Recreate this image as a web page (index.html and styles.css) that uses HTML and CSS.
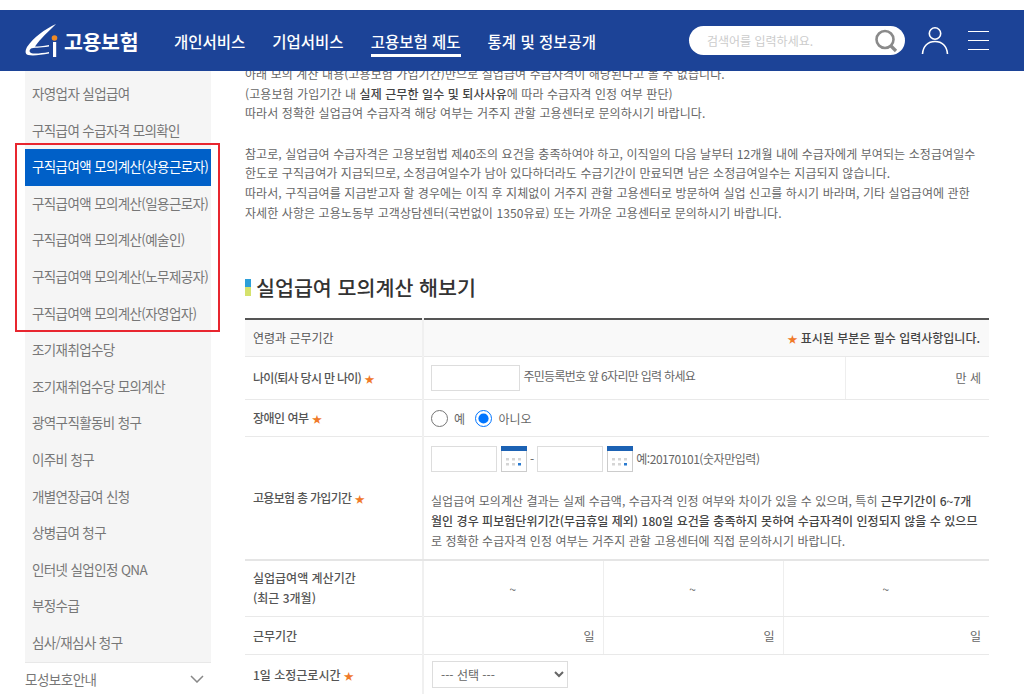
FILE: index.html
```html
<!DOCTYPE html>
<html lang="ko">
<head>
    <meta charset="UTF-8">
    <title>실업급여 모의계산</title>
    <link rel="stylesheet" href="styles.css">
</head>
<body>
<div class="page">
    <header class="top">
        <a class="logo">
            <svg width="33" height="35" viewBox="0 0 33 35">
                <path d="M31 1 C20 6 8 15 2 24 C0 28 0 31 3 32 C8 33 16 32 24 30.500 L24 29 C16 30.500 9 31 6 30 C4 29 4 27 6 25.500 C8 24.500 15 25 24 23.500 L24 22 C18 23 13 23.500 10 23.500 C15 16 24 8 31 1 Z" fill="#fff"/>
                <circle cx="29.500" cy="15" r="2.800" fill="#f08a24"/>
                <rect x="28" y="19" width="3.200" height="15" fill="#fff"/>
            </svg>
            <span class="logo-text">고용보험</span>
        </a>
        <nav class="gnb">
            <a>개인서비스</a>
            <a>기업서비스</a>
            <a class="on">고용보험 제도</a>
            <a>통계 및 정보공개</a>
        </nav>
        <div class="search">
            <span class="search-ph">검색어를 입력하세요.</span>
            <svg width="24" height="24" viewBox="0 0 24 24" fill="none" stroke="#8a8a8a" stroke-width="2.600">
                <circle cx="11" cy="10.500" r="8.500"/>
                <path d="M17 17 L22 22" stroke-width="3.200"/>
            </svg>
        </div>
        <svg class="user-ico" width="28" height="29" viewBox="0 0 28 29" fill="none" stroke="#fff" stroke-width="1.600">
            <circle cx="14" cy="7.500" r="5.700"/>
            <path d="M1.500 28 C2 20 7 15.500 14 15.500 C21 15.500 26 20 26.500 28"/>
        </svg>
        <div class="burger"><i></i><i></i><i></i></div>
    </header>

    <div class="body-wrap">
        <aside class="side">
            <ul class="side-list">
                <li>자영업자 실업급여</li>
                <li>구직급여 수급자격 모의확인</li>
                <li class="on">구직급여액 모의계산(상용근로자)</li>
                <li>구직급여액 모의계산(일용근로자)</li>
                <li>구직급여액 모의계산(예술인)</li>
                <li>구직급여액 모의계산(노무제공자)</li>
                <li>구직급여액 모의계산(자영업자)</li>
                <li>조기재취업수당</li>
                <li>조기재취업수당 모의계산</li>
                <li>광역구직활동비 청구</li>
                <li>이주비 청구</li>
                <li>개별연장급여 신청</li>
                <li>상병급여 청구</li>
                <li>인터넷 실업인정 QNA</li>
                <li>부정수급</li>
                <li>심사/재심사 청구</li>
            </ul>
            <div class="side-next">
                <span>모성보호안내</span>
                <svg width="14" height="8" viewBox="0 0 14 8" fill="none" stroke="#888" stroke-width="1.500"><path d="M1 1 L7 7 L13 1"/></svg>
            </div>
            <div class="red-box"></div>
        </aside>

        <main class="cont">
            <p class="desc">아래 모의 계산 내용(고용보험 가입기간)만으로 실업급여 수급자격이 해당된다고 볼 수 없습니다.<br>
            (고용보험 가입기간 내 <b>실제 근무한 일수 및 퇴사사유</b>에 따라 수급자격 인정 여부 판단)<br>
            따라서 정확한 실업급여 수급자격 해당 여부는 거주지 관할 고용센터로 문의하시기 바랍니다.</p>
            <p class="desc">참고로, 실업급여 수급자격은 고용보험법 제40조의 요건을 충족하여야 하고, 이직일의 다음 날부터 12개월 내에 수급자에게 부여되는 소정급여일수<br>
            한도로 구직급여가 지급되므로, 소정급여일수가 남아 있다하더라도 수급기간이 만료되면 남은 소정급여일수는 지급되지 않습니다.<br>
            따라서, 구직급여를 지급받고자 할 경우에는 이직 후 지체없이 거주지 관할 고용센터로 방문하여 실업 신고를 하시기 바라며, 기타 실업급여에 관한<br>
            자세한 사항은 고용노동부 고객상담센터(국번없이 1350유료) 또는 가까운 고용센터로 문의하시기 바랍니다.</p>

            <h2 class="tit"><i class="tit-mark"></i>실업급여 모의계산 해보기</h2>

            <table class="calc">
                <colgroup>
                    <col class="c-head"><col class="c-a"><col class="c-b"><col class="c-c"><col class="c-d">
                </colgroup>
                <tr class="r-head">
                    <th>연령과 근무기간</th>
                    <td colspan="4" class="req-note"><em>★</em> 표시된 부분은 필수 입력사항입니다.</td>
                </tr>
                <tr class="r-age">
                    <th><span class="tight-a">나이(퇴사 당시 만 나이)</span> <em>★</em></th>
                    <td colspan="3"><input class="box box-age" type="text"> <span class="tight-a">주민등록번호 앞 6자리만 입력 하세요</span></td>
                    <td class="right vline">만 세</td>
                </tr>
                <tr class="r-dis">
                    <th><span class="tight-b">장애인 여부</span> <em>★</em></th>
                    <td colspan="4">
                        <label class="rd"><input type="radio" name="dis"> 예</label>
                        <label class="rd"><input type="radio" name="dis" checked> 아니오</label>
                    </td>
                </tr>
                <tr class="r-period">
                    <th><span class="tight-c">고용보험 총 가입기간</span> <em>★</em></th>
                    <td colspan="4">
                        <div class="dates">
                            <input class="box box-date" type="text">
                            <svg class="cal" width="26" height="26" viewBox="0 0 26 26">
                                <rect x="0.500" y="0.500" width="25" height="25" fill="#fff" stroke="#ccc"/>
                                <rect x="0" y="0" width="26" height="5" fill="#1c62b4"/>
                                <path d="M5 12h3v2.500h-3zM11 12h3v2.500h-3zM17 12h3v2.500h-3zM5 17h3v2.500h-3zM11 17h3v2.500h-3z" fill="#d5d5d5"/>
                                <rect x="17" y="17" width="3" height="2.500" fill="#2a7bd0"/>
                            </svg>
                            <span class="dash">-</span>
                            <input class="box box-date" type="text">
                            <svg class="cal" width="26" height="26" viewBox="0 0 26 26">
                                <rect x="0.500" y="0.500" width="25" height="25" fill="#fff" stroke="#ccc"/>
                                <rect x="0" y="0" width="26" height="5" fill="#1c62b4"/>
                                <path d="M5 12h3v2.500h-3zM11 12h3v2.500h-3zM17 12h3v2.500h-3zM5 17h3v2.500h-3zM11 17h3v2.500h-3z" fill="#d5d5d5"/>
                                <rect x="17" y="17" width="3" height="2.500" fill="#2a7bd0"/>
                            </svg>
                            <span class="ex">예:20170101(숫자만입력)</span>
                        </div>
                        <p class="note">실업급여 모의계산 결과는 실제 수급액, 수급자격 인정 여부와 차이가 있을 수 있으며, 특히 <b>근무기간이 6~7개</b><br>
                        <b>월인 경우 피보험단위기간(무급휴일 제외) 180일 요건을 충족하지 못하여 수급자격이 인정되지 않을 수 있으므</b><br>
                        로 정확한 수급자격 인정 여부는 거주지 관할 고용센터에 직접 문의하시기 바랍니다.</p>
                    </td>
                </tr>
                <tr class="r-range">
                    <th>실업급여액 계산기간<br>(최근 3개월)</th>
                    <td class="center">~</td>
                    <td class="center vline">~</td>
                    <td colspan="2" class="center vline">~</td>
                </tr>
                <tr class="r-work">
                    <th>근무기간</th>
                    <td class="right">일</td>
                    <td class="right vline">일</td>
                    <td colspan="2" class="right vline">일</td>
                </tr>
                <tr class="r-hour">
                    <th>1일 소정근로시간 <em>★</em></th>
                    <td colspan="4">
                        <select class="sel"><option>--- 선택 ---</option></select>
                    </td>
                </tr>
            </table>
        </main>
    </div>
</div>
</body>
</html>
```

FILE: styles.css
```css
* {
    box-sizing: border-box;
}
html, body {
    margin: 0;
    padding: 0;
    background: #fff;
}
body {
    font-family: "Noto Sans CJK KR", "Noto Sans", sans-serif;
    font-size: 12px;
    color: #666;
}
.page {
    height: 694px;
    overflow: hidden;
    padding-top: 10px;
}

/* header */
.top {
    position: relative;
    z-index: 2;
    display: flex;
    align-items: center;
    height: 61px;
    padding-left: 25px;
    background: #1c4397;
}
.logo {
    display: flex;
    align-items: center;
    width: 149px;
    flex-shrink: 0;
}
.logo svg {
    flex-shrink: 0;
    margin-right: 6px;
}
.logo-text {
    font-size: 20.500px;
    font-weight: 700;
    color: #fff;
    letter-spacing: -0.300px;
    white-space: nowrap;
}
.gnb {
    display: flex;
    gap: 27px;
    width: 515px;
    flex-shrink: 0;
}
.gnb a {
    position: relative;
    font-size: 15.500px;
    font-weight: 500;
    color: #fff;
    white-space: nowrap;
}
.gnb a.on::after {
    content: "";
    position: absolute;
    left: 0;
    right: 0;
    bottom: -5px;
    height: 3px;
    background: #fff;
}
.search {
    display: flex;
    align-items: center;
    justify-content: space-between;
    width: 216px;
    height: 29px;
    padding: 0 7px 0 18px;
    border-radius: 15px;
    background: #fff;
    flex-shrink: 0;
}
.search-ph {
    font-size: 12px;
    color: #ccc;
}
.user-ico {
    margin-left: 16px;
    flex-shrink: 0;
}
.burger {
    display: flex;
    flex-direction: column;
    gap: 7.500px;
    width: 21px;
    margin-left: 18.500px;
}
.burger i {
    display: block;
    height: 1.500px;
    background: #fff;
}

/* layout */
.body-wrap {
    display: flex;
    align-items: flex-start;
    padding-left: 25px;
}

/* side menu */
.side {
    position: relative;
    width: 186px;
    flex-shrink: 0;
    margin-right: 34px;
}
.side-list {
    list-style: none;
    margin: 0;
    padding: 5px 0 0;
    background: #f5f5f5;
    border-bottom: 1px solid #e8e8e8;
}
.side-list li {
    height: 36.600px;
    line-height: 35.800px;
    padding-left: 7px;
    font-size: 13.500px;
    letter-spacing: -0.620px;
    color: #777;
    white-space: nowrap;
}
.side-list li.on {
    background: #0060c8;
    color: #fff;
}
.side-next {
    display: flex;
    align-items: center;
    justify-content: space-between;
    height: 33px;
    padding-right: 7px;
    font-size: 13.500px;
    letter-spacing: -0.500px;
    color: #777;
}
.red-box {
    position: absolute;
    left: -10px;
    top: 72px;
    width: 205px;
    height: 189px;
    border: 2px solid #e8262f;
}

/* content */
.cont {
    width: 744px;
    flex-shrink: 0;
    margin-top: -7px;
}
.desc {
    margin: 0 0 21px;
    font-size: 12px;
    letter-spacing: 0.080px;
    line-height: 19.600px;
    color: #666;
    white-space: nowrap;
}
.desc b, .note b {
    font-weight: 500;
    color: #444;
}
.tit {
    display: flex;
    align-items: center;
    margin: 50px 0 16px;
    font-size: 20.600px;
    font-weight: 500;
    line-height: 30px;
    color: #333;
}
.tit-mark {
    width: 6px;
    height: 17px;
    margin-right: 5px;
    background: linear-gradient(to bottom, #2d9fd9 50%, #d5e26c 50%);
}

/* table */
.calc {
    width: 744px;
    table-layout: fixed;
    border-collapse: collapse;
    border-top: 2px solid #555;
}
.c-head { width: 178px; }
.c-a { width: 180px; }
.c-b { width: 180px; }
.c-c { width: 62px; }
.c-d { width: 144px; }
.calc th, .calc td {
    padding: 0 8px;
    border-bottom: 1px solid #e9e9e9;
    font-size: 12px;
    font-weight: 400;
    color: #666;
    white-space: nowrap;
}
.calc td {
    padding-left: 7px;
}
.calc th {
    text-align: left;
    border-right: 2px solid #f0f0f0;
    font-weight: 500;
    color: #555;
}
.calc em {
    font-style: normal;
    font-size: 10px;
    color: #f07a2a;
}
.tight-a {
    letter-spacing: -0.700px;
}
.tight-b {
    letter-spacing: -0.500px;
}
.tight-c {
    letter-spacing: -0.700px;
}
.r-head { height: 37px; }
.r-head th, .r-head td { background: #f9f9f9; }
.r-head th { font-weight: 400; }
.calc .req-note {
    text-align: right;
    padding-right: 9px;
    font-weight: 500;
    color: #444;
}
.r-age { height: 43px; }
.r-dis { height: 37px; }
.calc .r-dis td { padding-top: 4px; }
.r-period { height: 124px; }
.calc .r-period td { padding-top: 1px; }
.calc .r-period td, .calc .r-period th { border-bottom: 2px solid #e5e5e5; }
.r-range { height: 56px; }
.r-range th { line-height: 20px; }
.r-work { height: 38px; }
.r-hour { height: 40px; }
.calc .vline {
    border-left: 1px solid #eee;
}
.right { text-align: right; }
.center { text-align: center; }
.box {
    height: 26px;
    border: 1px solid #ddd;
    background: #fff;
    padding: 0;
    vertical-align: middle;
}
.box-age { width: 89px; }
.box-date { width: 66px; }
.rd {
    display: inline-flex;
    align-items: center;
    gap: 6px;
    margin-right: 7px;
}
.rd input {
    width: 17px;
    height: 17px;
    margin: 0;
}
.dates {
    display: flex;
    align-items: center;
    gap: 4px;
}
.dash {
    margin: 0 -1px;
}
.ex {
    margin-left: -1px;
    letter-spacing: -0.450px;
}
.note {
    margin: 19.500px 0 0;
    letter-spacing: 0.040px;
    line-height: 20px;
}
.sel {
    width: 136px;
    height: 27px;
    margin-left: 1px;
    padding-left: 4px;
    border: 1px solid #ddd;
    background: #fff;
    font-family: inherit;
    font-size: 12px;
    color: #666;
    vertical-align: middle;
}
```
